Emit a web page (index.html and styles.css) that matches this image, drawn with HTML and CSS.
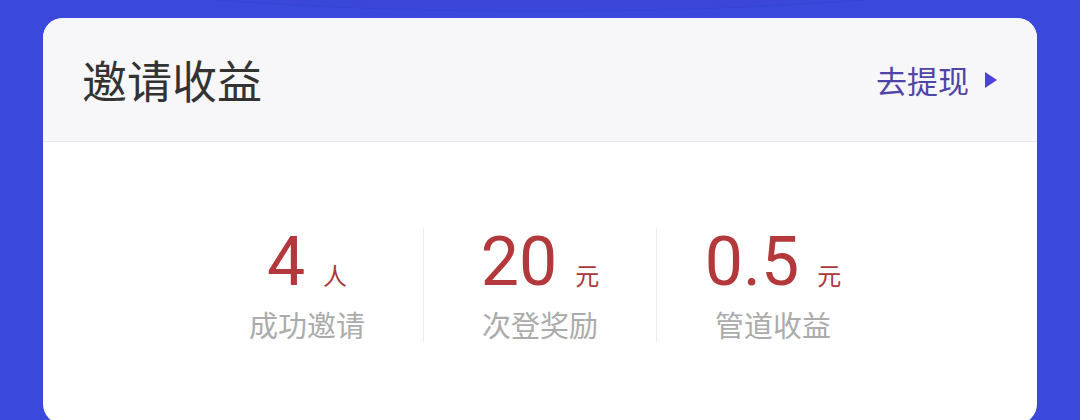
FILE: index.html
```html
<!DOCTYPE html>
<html lang="zh">
<head>
<meta charset="utf-8">
<link rel="stylesheet" href="styles.css">
</head>
<body>
<div class="page">
  <div class="card">
    <div class="card-head">
      <div class="title">邀请收益</div>
      <div class="action">
        <span class="action-text">去提现</span>
        <svg class="arrow" width="14" height="18" viewBox="0 0 14 18"><path d="M1 1 L13 9 L1 17 Z" fill="#4a44d4"/></svg>
      </div>
    </div>
    <div class="stats">
      <div class="stat">
        <div class="value"><span class="num">4</span><span class="unit">人</span></div>
        <div class="label">成功邀请</div>
      </div>
      <div class="stat">
        <div class="value"><span class="num">20</span><span class="unit">元</span></div>
        <div class="label">次登奖励</div>
      </div>
      <div class="stat">
        <div class="value"><span class="num">0.5</span><span class="unit">元</span></div>
        <div class="label">管道收益</div>
      </div>
    </div>
  </div>
</div>
</body>
</html>
```
FILE: styles.css
```css
html, body {
  margin: 0;
  padding: 0;
}
body {
  width: 1080px;
  height: 420px;
  overflow: hidden;
  background: #3a48dc;
  font-family: "Noto Sans CJK SC", "Noto Sans", sans-serif;
}
.page {
  height: 420px;
  padding-top: 18px;
  box-sizing: border-box;
  background: radial-gradient(ellipse 560px 60px at 540px -48px, #3a47d8 97%, #3445d6 99%, #3a48dc 100%);
}
.card {
  margin: 0 43px;
  height: 406px;
  background: #ffffff;
  border-radius: 20px;
  overflow: hidden;
}
.card-head {
  height: 123px;
  background: #f7f7f9;
  border-bottom: 1px solid #e9e9eb;
  display: flex;
  align-items: center;
  justify-content: space-between;
  padding: 0 39px 0 39px;
}
.title {
  font-size: 45px;
  color: #333333;
  letter-spacing: 0px;
  line-height: 1;
}
.action {
  display: flex;
  align-items: center;
  gap: 15px;
}
.action-text {
  font-size: 31px;
  color: #4f45a8;
  line-height: 1;
}
.arrow {
  display: block;
}
.stats {
  display: flex;
  justify-content: center;
  padding-top: 86px;
}
.stat {
  width: 232px;
  height: 114px;
  display: flex;
  flex-direction: column;
  align-items: center;
}
.stat + .stat {
  border-left: 1px solid #eeeeee;
}
.value {
  display: flex;
  align-items: baseline;
  gap: 18px;
  color: #b3383b;
  height: 68px;
}
.num {
  font-family: Roboto, "Noto Sans", sans-serif;
  font-size: 68px;
  line-height: 68px;
}
.unit {
  font-size: 24px;
  line-height: 1;
  color: #a8393b;
}
.label {
  margin-top: 14px;
  font-size: 29px;
  line-height: 1;
  color: #ababab;
}
```
